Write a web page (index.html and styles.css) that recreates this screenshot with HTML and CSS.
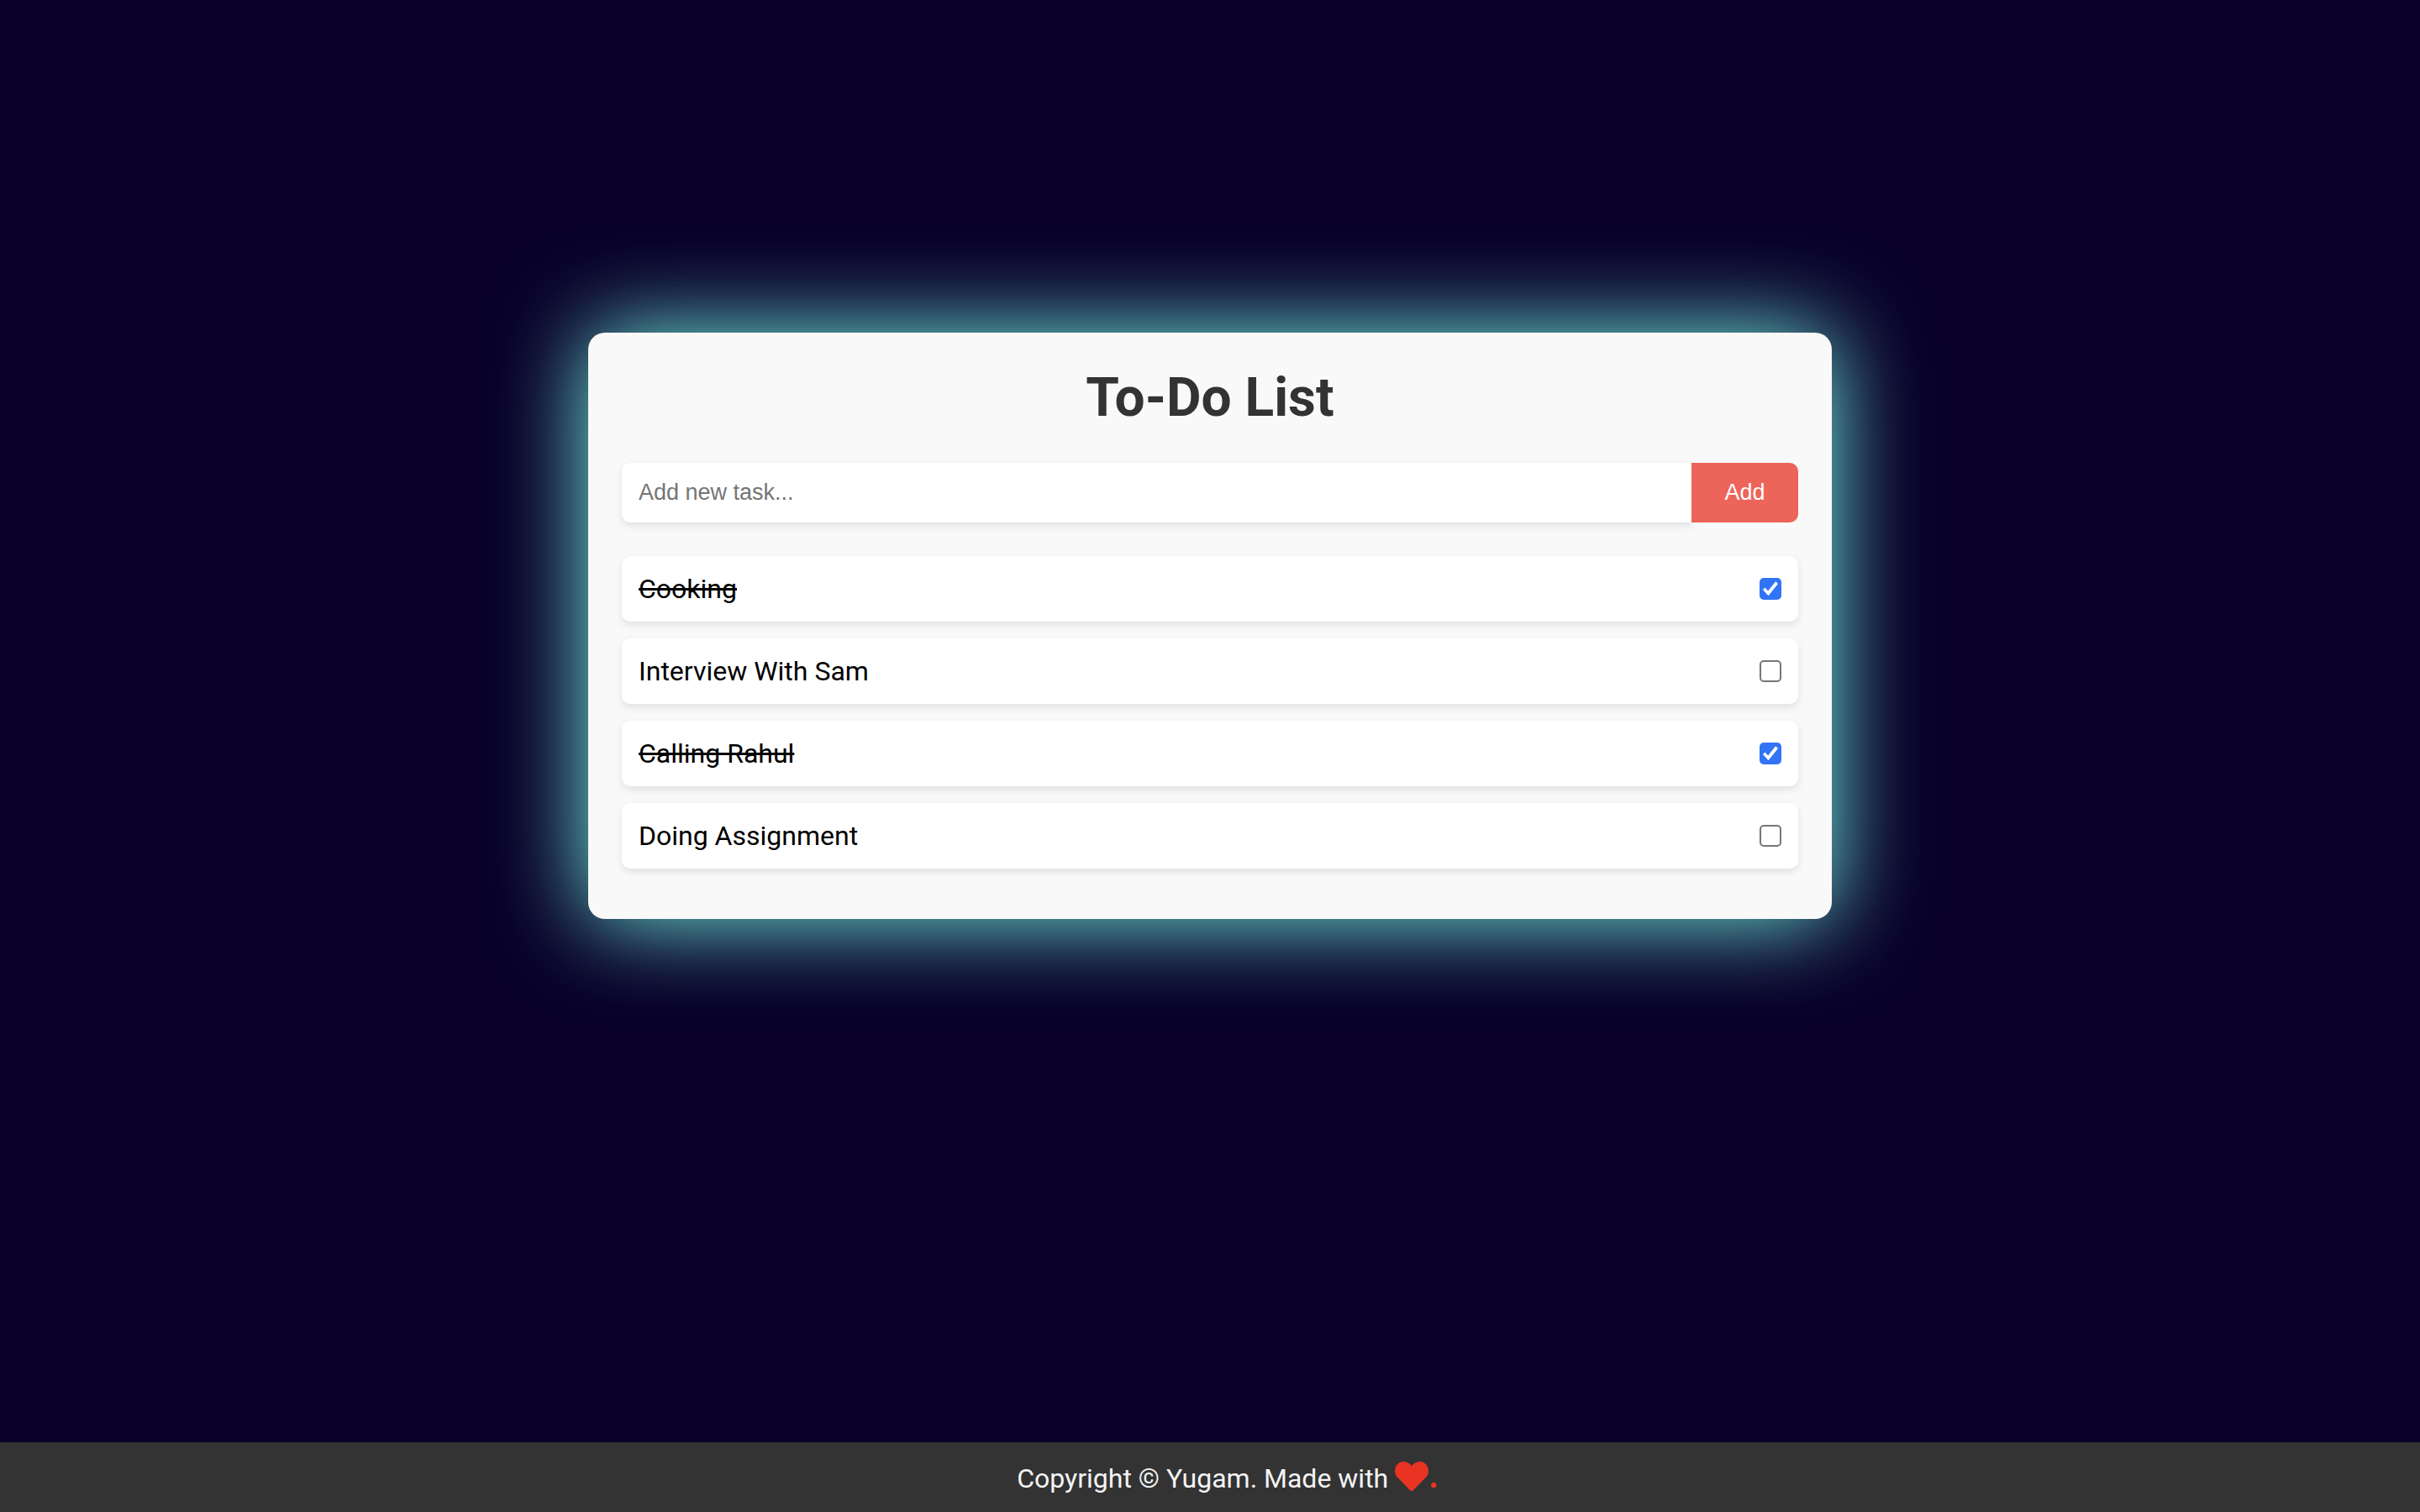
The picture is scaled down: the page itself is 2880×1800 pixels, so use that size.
FILE: index.html
```html
<!DOCTYPE html>
<html lang="en">
<head>
<meta charset="utf-8">
<title>To-Do List</title>
<link rel="stylesheet" href="styles.css">
</head>
<body>
<main>
  <section class="card">
    <h1>To-Do List</h1>
    <form class="add-form">
      <button class="add-button" type="button">Add</button>
      <input class="task-input" type="text" placeholder="Add new task..." aria-label="New task">
    </form>
    <ul class="tasks">
      <li class="task done"><label for="t1">Cooking</label><input type="checkbox" id="t1" checked></li>
      <li class="task"><label for="t2">Interview With Sam</label><input type="checkbox" id="t2"></li>
      <li class="task done"><label for="t3">Calling Rahul</label><input type="checkbox" id="t3" checked></li>
      <li class="task"><label for="t4">Doing Assignment</label><input type="checkbox" id="t4"></li>
    </ul>
  </section>
</main>
<footer class="footer">
  <p>Copyright © Yugam. Made with <span class="love"><svg class="heart" viewBox="0 0 40 35" aria-hidden="true"><path d="M36.100 2.400C31.800-1.200 25.500-0.600 21.500 3.500L20 5.100L18.500 3.500C14.500-0.600 8.200-1.200 3.900 2.400C-1 6.600-1.300 14.100 3.100 18.700L18.200 34.200C19.200 35.200 20.800 35.200 21.800 34.200L36.900 18.700C41.300 14.100 41 6.600 36.100 2.400z"/></svg>.</span></p>
</footer>
</body>
</html>
```
FILE: styles.css
```css
* {
  box-sizing: border-box;
  margin: 0;
  padding: 0;
}

body {
  display: flex;
  flex-direction: column;
  min-height: 100vh;
  background: #090029;
  font-family: Roboto, sans-serif;
}

main {
  flex: 1;
  padding: 396px 40px 40px;
}

.card {
  max-width: 1480px;
  margin: 0 auto;
  padding: 40px;
  border-radius: 20px;
  background: #f9f9f9;
  box-shadow: 0 0 108px #7afae8;
}

h1 {
  margin-bottom: 40px;
  color: #333;
  font-size: 64px;
  line-height: 75px;
  text-align: center;
}

.add-form {
  display: flex;
  flex-direction: row-reverse;
  margin-bottom: 40px;
}

.task-input,
.add-button {
  height: 71px;
  border: 0;
  font-family: "Liberation Sans", Arial, sans-serif;
  font-size: 27px;
}

.task-input {
  flex: 1;
  min-width: 0;
  padding: 0 20px;
  border-radius: 10px 0 0 10px;
  background: #fff;
  box-shadow: 0 4px 10px rgba(0, 0, 0, 0.1);
}

.task-input::placeholder {
  color: #757575;
}

.add-button {
  z-index: 1;
  width: 127px;
  border-radius: 0 10px 10px 0;
  background: #ec645a;
  color: #fff;
}

.tasks {
  list-style: none;
}

.task {
  display: flex;
  align-items: center;
  justify-content: space-between;
  height: 78px;
  margin-bottom: 20px;
  padding: 0 20px;
  border-radius: 10px;
  background: #fff;
  box-shadow: 0 4px 10px rgba(0, 0, 0, 0.1);
  color: #000;
  font-size: 32px;
}

.done label {
  text-decoration: line-through;
}

.task input {
  display: grid;
  place-items: center;
  width: 26px;
  height: 26px;
  border: 2px solid #767676;
  border-radius: 5px;
  background: #fff;
  appearance: none;
}

.task input:checked {
  border-color: #3274f6;
  background: #3274f6;
}

.task input:checked::before {
  content: "";
  width: 18px;
  height: 18px;
  background: #fff;
  clip-path: polygon(0 56%, 14% 42%, 34% 64%, 84% 2%, 100% 16%, 36% 96%);
}

.footer {
  padding: 20px 0 20px 42px;
  background: #333;
  color: #f4f4f4;
  font-size: 32px;
  line-height: 42px;
  text-align: center;
}

.footer p {
  height: 43px;
}

.love {
  color: #e93323;
  font-size: 40px;
  font-weight: 700;
}

.heart {
  width: 40px;
  height: 35px;
  vertical-align: -4px;
  fill: currentColor;
}
```
